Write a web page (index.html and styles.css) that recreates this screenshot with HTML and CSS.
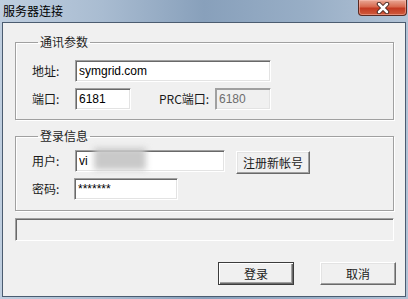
FILE: index.html
```html
<!DOCTYPE html>
<html lang="zh-CN">
<head>
    <meta charset="UTF-8">
    <title>服务器连接</title>
    <link rel="stylesheet" href="styles.css">
</head>
<body>
    <div class="window">
        <div class="titlebar">
            <span class="title">服务器连接</span>
            <div class="close">
                <svg width="16" height="12" viewBox="0 0 16 12">
                    <path d="M4 2 L12 10 M12 2 L4 10" stroke="#4a2a25" stroke-width="4.5" stroke-linecap="round"/>
                    <path d="M4 2 L12 10 M12 2 L4 10" stroke="#fff" stroke-width="2.5" stroke-linecap="round"/>
                </svg>
            </div>
        </div>

        <div class="client">
            <fieldset class="group group-net">
                <legend>通讯参数</legend>
                <div class="row">
                    <label class="lbl">地址:</label>
                    <input class="field f-addr" type="text" value="symgrid.com">
                </div>
                <div class="row">
                    <label class="lbl">端口:</label>
                    <input class="field f-port" type="text" value="6181">
                    <label class="lbl lbl-prc">PRC端口:</label>
                    <input class="field f-port" type="text" value="6180" disabled>
                </div>
            </fieldset>

            <fieldset class="group group-login">
                <legend>登录信息</legend>
                <div class="row">
                    <label class="lbl">用户:</label>
                    <div class="user-wrap">
                        <input class="field f-user" type="text" value="vi">
                        <span class="smudge"></span>
                    </div>
                    <button class="btn btn-reg">注册新帐号</button>
                </div>
                <div class="row">
                    <label class="lbl">密码:</label>
                    <input class="field f-pass" type="text" value="*******">
                </div>
            </fieldset>

            <div class="statusbox"></div>

            <div class="actions">
                <button class="btn btn-main default">登录</button>
                <button class="btn btn-main">取消</button>
            </div>
        </div>
    </div>
</body>
</html>
```

FILE: styles.css
```css
body {
    margin: 0;
    width: 408px;
    height: 299px;
    overflow: hidden;
    font-family: "Noto Sans CJK SC", "Liberation Sans", sans-serif;
    font-size: 12px;
}
.window {
    height: 299px;
    background: linear-gradient(90deg, #bfcedf 0%, #a9bcd1 25%, #88a0bb 50%, #98aec6 75%, #b2c3d6 100%);
    display: flex;
    flex-direction: column;
}
.titlebar {
    height: 22px;
    display: flex;
    align-items: flex-start;
}
.title {
    margin-left: 3px;
    line-height: 22px;
    color: #000;
    font-size: 12px;
}
.close {
    margin-left: auto;
    margin-right: 1px;
    width: 47px;
    height: 15px;
    border: 1px solid #5a2a22;
    border-top: none;
    border-radius: 0 0 4px 4px;
    background: linear-gradient(#e9a896, #d8694f 45%, #c33a22 55%, #cf5a3c);
    box-shadow: inset 0 0 0 1px rgba(255, 200, 190, 0.45);
    display: flex;
    align-items: center;
    justify-content: center;
}
.client {
    margin: 0 2px 2px 2px;
    height: 273px;
    background: #f0f0f0;
    border: 1px solid #4b5c70;
    padding: 0 11px 0 12px;
}

/* group boxes */
.group {
    margin: 0;
    padding: 0 0 0 16px;
    border: 1px solid #a0a0a0;
    box-shadow: 1px 1px 0 #fff, inset 1px 1px 0 #fff;
    display: flex;
    flex-direction: column;
    gap: 6px;
}
.group legend {
    margin-left: 6px;
    padding: 0 2px;
    line-height: 16px;
    color: #1e1e1e;
}
.group-net {
    margin-top: 11px;
    padding-top: 10px;
    padding-bottom: 9px;
}
.group-login {
    margin-top: 8px;
    padding-top: 6px;
    padding-bottom: 10px;
}
.row {
    display: flex;
    align-items: center;
    height: 22px;
}
.lbl {
    width: 43px;
    line-height: 22px;
    color: #1a1a1a;
}
.lbl-prc {
    margin-left: 28px;
    width: 56px;
}

/* text fields */
.field {
    box-sizing: border-box;
    height: 22px;
    margin: 0;
    padding: 0 3px;
    border: 1px solid;
    border-color: #a0a0a0 #fff #fff #a0a0a0;
    box-shadow: inset 1px 1px 0 #696969, inset -1px -1px 0 #e3e3e3;
    background: #fff;
    color: #000;
    font-family: "Liberation Sans", sans-serif;
    font-size: 12px;
    outline: none;
}
.field:disabled {
    background: #f0f0f0;
    color: #6d6d6d;
    box-shadow: inset 1px 1px 0 #a0a0a0, inset -1px -1px 0 #e3e3e3;
}
.f-addr { width: 196px; }
.f-port { width: 56px; }
.f-user { width: 150px; }
.f-pass { width: 104px; margin-left: -1px; }
.user-wrap {
    position: relative;
    height: 22px;
}
.smudge {
    position: absolute;
    left: 19px;
    top: -2px;
    width: 52px;
    height: 22px;
    background: #c9c9c9;
    filter: blur(3px);
}

/* buttons */
.btn {
    box-sizing: border-box;
    margin: 0;
    padding: 0;
    height: 22px;
    border: 1px solid;
    border-color: #fff #696969 #696969 #fff;
    box-shadow: inset -1px -1px 0 #a0a0a0, inset 1px 1px 0 #e3e3e3;
    background: #f0f0f0;
    color: #1a1a1a;
    font-family: "Noto Sans CJK SC", sans-serif;
    font-size: 12px;
}
.btn-reg {
    margin-left: 11px;
    width: 74px;
    height: 23px;
    margin-top: 2px;
}
.btn-main {
    width: 76px;
    height: 23px;
}
.btn-main.default {
    border-color: #3c3c3c;
    box-shadow: inset 1px 1px 0 #fff, inset -1px -1px 0 #696969, inset -2px -2px 0 #a0a0a0;
}

.statusbox {
    margin-top: 7px;
    height: 23px;
    box-sizing: border-box;
    border: 1px solid;
    border-color: #a0a0a0 #fff #fff #a0a0a0;
    box-shadow: inset 1px 1px 0 #696969;
}
.actions {
    margin-top: 21px;
    margin-right: -2px;
    display: flex;
    justify-content: flex-end;
    gap: 26px;
}
```
